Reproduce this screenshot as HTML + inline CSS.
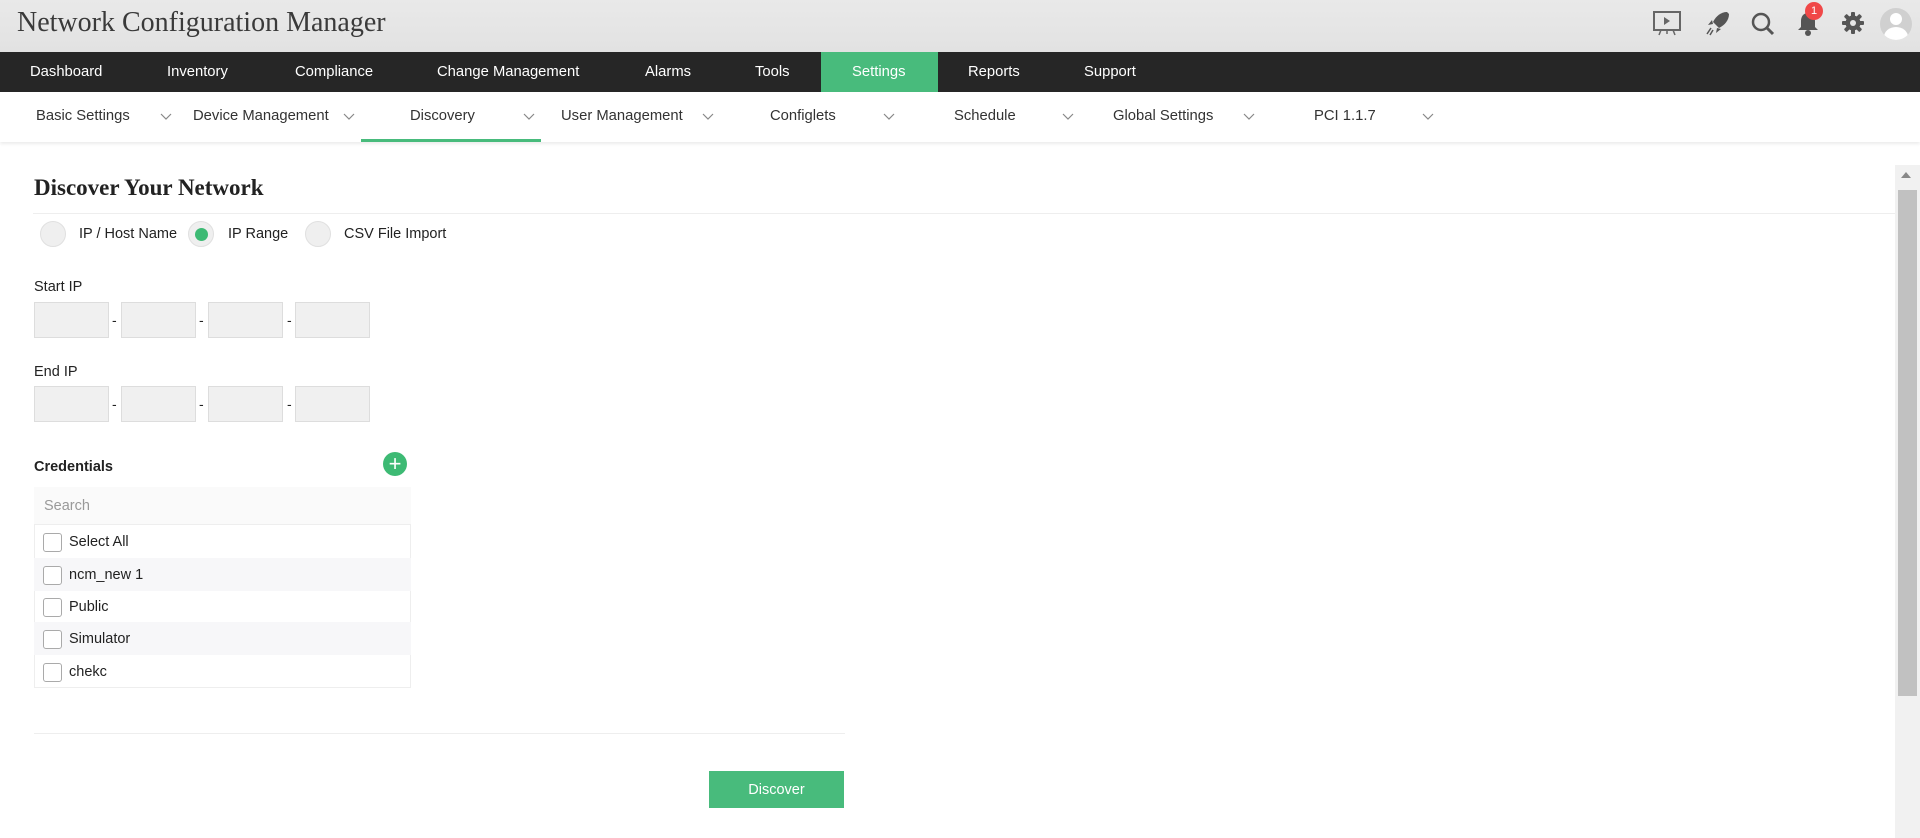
<!DOCTYPE html>
<html><head><meta charset="utf-8"><style>
*{margin:0;padding:0;box-sizing:border-box}
body{width:1920px;height:838px;overflow:hidden;background:#fff;font-family:"Liberation Sans",sans-serif;color:#222;position:relative}
.a{position:absolute;white-space:nowrap}
#hdr{position:absolute;left:0;top:0;width:1920px;height:52px;background:linear-gradient(#e9e9e9,#e2e2e2)}
#nav{position:absolute;left:0;top:52px;width:1920px;height:40px;background:#262626}
#nav .a{color:#fff;font-size:14.8px;top:12px}
#sub{position:absolute;left:0;top:92px;width:1920px;height:50px;background:#fff;box-shadow:0 2px 3px rgba(0,0,0,.08)}
#sub .a{font-size:14.8px;color:#333;top:16px}
#sub svg{position:absolute;top:21px}
.inp{position:absolute;width:75px;height:36px;background:#f0f0f0;border:1px solid #ddd}
.dash{position:absolute;font-size:14px}
.rad{position:absolute;width:26px;height:26px;border-radius:50%;background:#efefef;border:1px solid #e0e0e0}
.row{position:absolute;left:34px;width:377px;height:33px}
.cb{position:absolute;left:9px;top:8px;width:19px;height:19px;border:1px solid #aaa;border-radius:3px;background:#fff}
.row span{position:absolute;left:35px;top:9px;font-size:14.5px}
.lb{font-size:14.5px}
</style></head><body>
<div id="hdr">
<div class="a" style="left:17px;top:7px;font-family:'Liberation Serif',serif;font-size:28px;color:#3a3a3a">Network Configuration Manager</div>
<svg class="a" style="left:1652px;top:10px" width="30" height="26" viewBox="0 0 30 26"><rect x="2" y="2" width="26" height="18" fill="none" stroke="#666" stroke-width="2"/><path d="M12 7l6 4-6 4z" fill="#666"/><path d="M9 20l-2 5M21 20l2 5M15 20v4" stroke="#666" stroke-width="1.5"/></svg>
<svg class="a" style="left:1705px;top:10px" width="26" height="26" viewBox="0 0 26 26"><path d="M22 2c-6 0-11 4-14 10l6 6c6-3 10-8 10-14z" fill="#555"/><path d="M8 14l-5 1 4-5zM12 18l-1 5 5-4z" fill="#555"/><path d="M6 18l-4 6M8 20l-3 5" stroke="#555" stroke-width="1.5"/></svg>
<svg class="a" style="left:1750px;top:11px" width="26" height="26" viewBox="0 0 26 26"><circle cx="11" cy="11" r="8" fill="none" stroke="#555" stroke-width="2.5"/><path d="M17 17l6 6" stroke="#555" stroke-width="3"/></svg>
<svg class="a" style="left:1796px;top:10px" width="24" height="28" viewBox="0 0 24 28"><path d="M12 3c-5 0-7 4-7 8v6l-3 3h20l-3-3v-6c0-4-2-8-7-8z" fill="#555"/><circle cx="12" cy="23" r="3" fill="#555"/></svg>
<div class="a" style="left:1805px;top:2px;width:18px;height:18px;border-radius:50%;background:#f04848;color:#fff;font-size:11px;text-align:center;line-height:18px">1</div>
<svg class="a" style="left:1841px;top:11px" width="24" height="24" viewBox="0 0 24 24"><g fill="#555"><rect x="10" y="1" width="4" height="22" rx="1"/><rect x="10" y="1" width="4" height="22" rx="1" transform="rotate(45 12 12)"/><rect x="10" y="1" width="4" height="22" rx="1" transform="rotate(90 12 12)"/><rect x="10" y="1" width="4" height="22" rx="1" transform="rotate(135 12 12)"/><circle cx="12" cy="12" r="7.5"/></g><circle cx="12" cy="12" r="3" fill="#e6e6e6"/></svg>
<div class="a" style="left:1880px;top:8px;width:32px;height:32px;border-radius:50%;background:#d0d0d0;overflow:hidden"><div style="position:absolute;left:10px;top:5px;width:12px;height:12px;border-radius:50%;background:#fff"></div><div style="position:absolute;left:4px;top:19px;width:24px;height:20px;border-radius:50%;background:#fff"></div></div>
</div>
<div id="nav">
<div class="a" style="left:821px;top:0;width:117px;height:40px;background:#48bb7c"></div>
<div class="a" style="left:30px">Dashboard</div>
<div class="a" style="left:167px">Inventory</div>
<div class="a" style="left:295px">Compliance</div>
<div class="a" style="left:437px">Change Management</div>
<div class="a" style="left:645px">Alarms</div>
<div class="a" style="left:755px">Tools</div>
<div class="a" style="left:852px">Settings</div>
<div class="a" style="left:968px">Reports</div>
<div class="a" style="left:1084px">Support</div>
</div>
<div id="sub">
<div class="a" style="left:36px">Basic Settings</div><svg style="left:160px" width="12" height="8"><path d="M1 1l5 5 5-5" fill="none" stroke="#888" stroke-width="1.2"/></svg>
<div class="a" style="left:193px">Device Management</div><svg style="left:343px" width="12" height="8"><path d="M1 1l5 5 5-5" fill="none" stroke="#888" stroke-width="1.2"/></svg>
<div class="a" style="left:410px">Discovery</div><svg style="left:523px" width="12" height="8"><path d="M1 1l5 5 5-5" fill="none" stroke="#888" stroke-width="1.2"/></svg>
<div class="a" style="left:361px;top:47px;width:180px;height:3px;background:#48bb7c"></div>
<div class="a" style="left:561px">User Management</div><svg style="left:702px" width="12" height="8"><path d="M1 1l5 5 5-5" fill="none" stroke="#888" stroke-width="1.2"/></svg>
<div class="a" style="left:770px">Configlets</div><svg style="left:883px" width="12" height="8"><path d="M1 1l5 5 5-5" fill="none" stroke="#888" stroke-width="1.2"/></svg>
<div class="a" style="left:954px">Schedule</div><svg style="left:1062px" width="12" height="8"><path d="M1 1l5 5 5-5" fill="none" stroke="#888" stroke-width="1.2"/></svg>
<div class="a" style="left:1113px">Global Settings</div><svg style="left:1243px" width="12" height="8"><path d="M1 1l5 5 5-5" fill="none" stroke="#888" stroke-width="1.2"/></svg>
<div class="a" style="left:1314px">PCI 1.1.7</div><svg style="left:1422px" width="12" height="8"><path d="M1 1l5 5 5-5" fill="none" stroke="#888" stroke-width="1.2"/></svg>
</div>
<div class="a" style="left:34px;top:175px;font-family:'Liberation Serif',serif;font-size:23px;font-weight:bold;color:#222">Discover Your Network</div>
<div class="a" style="left:33px;top:213px;width:1862px;height:1px;background:#eee"></div>
<div class="rad" style="left:40px;top:221px"></div>
<div class="a lb" style="left:79px;top:226px">IP / Host Name</div>
<div class="rad" style="left:188px;top:221px"><div style="position:absolute;left:6px;top:6px;width:13px;height:13px;border-radius:50%;background:#3dba74"></div></div>
<div class="a lb" style="left:228px;top:226px">IP Range</div>
<div class="rad" style="left:305px;top:221px"></div>
<div class="a lb" style="left:344px;top:226px">CSV File Import</div>
<div class="a lb" style="left:34px;top:279px">Start IP</div>
<div class="inp" style="left:34px;top:302px"></div><div class="dash" style="left:112px;top:312px">-</div>
<div class="inp" style="left:121px;top:302px"></div><div class="dash" style="left:199px;top:312px">-</div>
<div class="inp" style="left:208px;top:302px"></div><div class="dash" style="left:287px;top:312px">-</div>
<div class="inp" style="left:295px;top:302px"></div>
<div class="a lb" style="left:34px;top:364px">End IP</div>
<div class="inp" style="left:34px;top:386px"></div><div class="dash" style="left:112px;top:396px">-</div>
<div class="inp" style="left:121px;top:386px"></div><div class="dash" style="left:199px;top:396px">-</div>
<div class="inp" style="left:208px;top:386px"></div><div class="dash" style="left:287px;top:396px">-</div>
<div class="inp" style="left:295px;top:386px"></div>
<div class="a lb" style="left:34px;top:459px;font-weight:bold">Credentials</div>
<div class="a" style="left:383px;top:452px;width:24px;height:24px;border-radius:50%;background:#3dba74;color:#fff;font-size:22px;line-height:23px;text-align:center">+</div>
<div class="a" style="left:34px;top:487px;width:377px;height:201px;border:1px solid #eee"></div>
<div class="row" style="top:487px;height:38px;background:#fafafa;border-bottom:1px solid #eee"><span style="left:10px;top:11px;color:#999">Search</span></div>
<div class="row" style="top:525px"><div class="cb"></div><span>Select All</span></div>
<div class="row" style="top:558px;background:#f7f7f9"><div class="cb"></div><span>ncm_new 1</span></div>
<div class="row" style="top:590px"><div class="cb"></div><span>Public</span></div>
<div class="row" style="top:622px;background:#f7f7f9"><div class="cb"></div><span>Simulator</span></div>
<div class="row" style="top:655px"><div class="cb"></div><span>chekc</span></div>
<div class="a" style="left:34px;top:733px;width:811px;height:1px;background:#eee"></div>
<div class="a" style="left:709px;top:771px;width:135px;height:37px;background:#48bb7c;color:#fff;font-size:14.5px;text-align:center;line-height:38px">Discover</div>
<div class="a" style="left:1895px;top:165px;width:25px;height:673px;background:#f1f1f1"></div>
<div class="a" style="left:1901px;top:172px;width:0;height:0;border-left:5px solid transparent;border-right:5px solid transparent;border-bottom:6px solid #888"></div>
<div class="a" style="left:1898px;top:190px;width:19px;height:506px;background:#c1c1c1"></div>
</body></html>
